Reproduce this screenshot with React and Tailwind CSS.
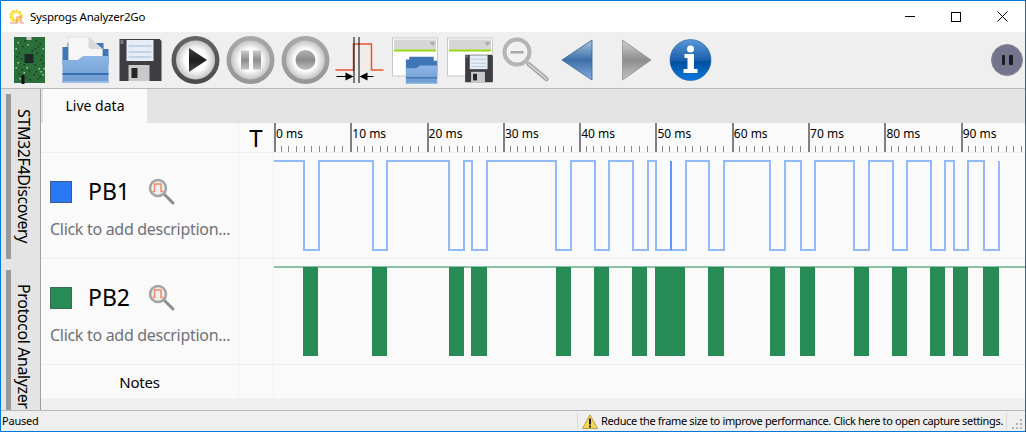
import { useId } from 'react';

const lows = [
  [303, 319], [372, 387], [448, 464], [471, 487], [555, 571], [594, 609], [632, 648], [655, 686],
  [708, 724], [769, 785], [800, 815], [853, 869], [892, 907], [930, 945], [953, 968], [983, 999],
];
const bars = [
  [303, 318], [372, 387], [449, 464], [471, 487], [556, 571], [594, 609], [632, 647], [655, 685],
  [708, 724], [770, 785], [800, 815], [854, 869], [892, 907], [930, 945], [953, 968], [983, 999],
];
const ticks = [1, 2, 3, 4, 5, 6, 7, 8, 9];
const labels = ['0 ms', '10 ms', '20 ms', '30 ms', '40 ms', '50 ms', '60 ms', '70 ms', '80 ms', '90 ms'];
const boardDots = [
  [-13, -18], [-8, -14], [9, -17], [12, -12], [-12, -8], [11, -5], [-13, 2], [12, 3], [-9, 9], [8, 8],
  [-12, 13], [3, 14], [12, 14], [-5, 17], [7, 18], [-3, -16], [4, -12], [-10, -2], [10, 11], [-7, 4], [6, -8],
  [-15, -12], [-6, -20], [5, -20], [-15, 7], [-2, 10], [4, 4], [-11, 18], [10, -1], [7, -14], [-4, 7], [1, -10],
  [-14, -4], [13, 8], [-1, 19], [9, 16], [-7, 12], [5, 11],
];

// every toolbar icon is drawn around the middle of its 55px slot
const Slot = ({ children }) => (
  <svg width="55" height="56" viewBox="-27.5 -28 55 56" className="flex-none block">{children}</svg>
);

const Board = () => (
  <Slot>
    <rect x="-16.5" y="-23" width="31" height="46" fill="#2a6f3a" />
    <rect x="-4" y="-23" width="5" height="3" fill="#c8c8c8" />
    <rect x="-6" y="-6" width="9" height="9" fill="#1f2a24" />
    {boardDots.map(([x, y], i) => (
      <rect key={i} x={x} y={y} width="1.5" height="1.5" fill={i % 3 === 0 ? '#a9c9a8' : '#123d1e'} />
    ))}
    <rect x="-9" y="15" width="3" height="9" fill="#111" />
  </Slot>
);

const FolderBack = () => <path d="M-23 -14 h5 v-4 h36 v6 h5 v16 h-46 z" fill="#3f76b8" />;

const FolderFront = () => {
  const id = useId();
  return (
    <>
      <defs>
        <linearGradient id={id} x1="0" y1="0" x2="0" y2="1">
          <stop offset="0" stopColor="#8db6e4" />
          <stop offset="1" stopColor="#6c9ad0" />
        </linearGradient>
      </defs>
      <path d="M-23 -1 h15 l6 -4 h25 v27 h-46 z" fill={`url(#${id})`} />
      <rect x="-23" y="12" width="46" height="2" fill="#3b70b0" />
      <rect x="-23" y="20" width="46" height="2" fill="#9cbde3" />
    </>
  );
};

const Folder = ({ dx = 0, dy = 0, s = 1 }) => (
  <g transform={`translate(${dx} ${dy}) scale(${s})`}>
    <FolderBack />
    <FolderFront />
  </g>
);

const Floppy = ({ dx = 0, dy = 0, s = 1 }) => (
  <g transform={`translate(${dx} ${dy}) scale(${s})`}>
    <path d="M-21 -21 h40 l2 2 v40 h-42 z" fill="#3d3d42" />
    <rect x="-14" y="-20" width="27" height="21" fill="#e6edf5" />
    <path d="M-12 -14 h23 M-12 -8 h23 M-12 -3 h23" stroke="#9db8d6" strokeWidth="1" />
    <rect x="-12" y="5" width="21" height="16" fill="#c9c9c9" />
    <rect x="-9" y="8" width="6" height="10" fill="#26262a" />
    <rect x="-20" y="-20" width="3" height="4" fill="#77777d" />
  </g>
);

const OpenFile = () => (
  <Slot>
    <g transform="translate(0 1)"><FolderBack /></g>
    <path d="M-17 -23 h20 l14 12 v14 h-34 z" fill="#f6f6f6" stroke="#d0d0d0" strokeWidth="0.5" />
    <path d="M3 -23 l14 12 h-11 q-3 0 -3 -3 z" fill="#d8d8d8" />
    <g transform="translate(0 1)"><FolderFront /></g>
  </Slot>
);

const Ring = ({ ring, ring2, children }) => {
  const id = useId();
  const id2 = useId();
  return (
    <Slot>
      <defs>
        <linearGradient id={id} x1="0" y1="0" x2="0" y2="1">
          <stop offset="0" stopColor={ring2} />
          <stop offset="1" stopColor={ring} />
        </linearGradient>
        <radialGradient id={id2} cx="0.5" cy="0.5" r="0.5">
          <stop offset="0.55" stopColor="#ffffff" />
          <stop offset="1" stopColor="#c4c4c4" />
        </radialGradient>
      </defs>
      <circle r="24" fill={`url(#${id})`} />
      <circle r="19.5" fill={`url(#${id2})`} />
      {children}
    </Slot>
  );
};

const Fade = ({ id, top, mid, bottom }) => (
  <defs>
    <linearGradient id={id} x1="0" y1="0" x2="0" y2="1">
      <stop offset="0" stopColor={top} />
      <stop offset="0.5" stopColor={mid} />
      <stop offset="1" stopColor={bottom} />
    </linearGradient>
  </defs>
);

const PlayIcon = () => {
  const id = useId();
  return (
    <Ring ring="#4a4a4a" ring2="#666666">
      <Fade id={id} top="#444444" mid="#1c1c1c" bottom="#4a4a4a" />
      <path d="M-6.5 -12 L11.5 0 L-6.5 12 z" fill={`url(#${id})`} />
    </Ring>
  );
};

const PauseIcon = () => {
  const id = useId();
  return (
    <Ring ring="#969696" ring2="#a8a8a8">
      <Fade id={id} top="#cccccc" mid="#8e8e8e" bottom="#c2c2c2" />
      <rect x="-9.5" y="-9.5" width="8" height="19" fill={`url(#${id})`} />
      <rect x="2.5" y="-9.5" width="8" height="19" fill={`url(#${id})`} />
    </Ring>
  );
};

const RecordIcon = () => {
  const id = useId();
  return (
    <Ring ring="#969696" ring2="#a8a8a8">
      <Fade id={id} top="#b2b2b2" mid="#8c8c8c" bottom="#c0c0c0" />
      <circle r="10" fill={`url(#${id})`} />
    </Ring>
  );
};

const Pulse = () => (
  <Slot>
    <rect x="-7" y="-16" width="18" height="26" fill="#f2ebe8" />
    <path d="M-25 10 H-7 V-16 H11 V10 H23" fill="none" stroke="#e8572f" strokeWidth="1.5" />
    <path d="M-6.5 -23 V23 M-1.5 -23 V23" stroke="#000" strokeWidth="1" />
    <path d="M-24 16.5 H-12 M4 16.5 H13" stroke="#000" strokeWidth="1" />
    <path d="M-7 16.5 L-15 12.5 V20.5 z M-1 16.5 L7 12.5 V20.5 z" fill="#000" />
  </Slot>
);

const Config = ({ children }) => (
  <Slot>
    <rect x="-23" y="-22" width="45" height="38" fill="#fff" stroke="#c8c8c8" />
    <rect x="-21.5" y="-20.5" width="42" height="10" fill="#d6d6d6" />
    <rect x="-21.5" y="-10.5" width="42" height="2" fill="#93d60f" />
    <path d="M14 -18 h6 l-3 4 z" fill="#aaa" />
    {children}
  </Slot>
);

const Magnifier = () => (
  <Slot>
    <path d="M3 4 L21 19" stroke="#a9a9a9" strokeWidth="4.5" strokeLinecap="round" />
    <path d="M3 4 L21 19" stroke="#d6d6d6" strokeWidth="1.5" strokeLinecap="round" />
    <circle cx="-8.5" cy="-8" r="12.5" fill="#f1f1f1" stroke="#b4b4b4" strokeWidth="4" />
    <rect x="-15" y="-9" width="13" height="2.5" fill="#a8a8a8" />
  </Slot>
);

const ArrowLeft = () => {
  const id = useId();
  return (
    <Slot>
      <Fade id={id} top="#a9c6e0" mid="#3d6fa8" bottom="#86aee2" />
      <path d="M11.5 -20 L-18.5 0 L11.5 20 z" fill={`url(#${id})`} stroke="#2e5f94" strokeWidth="0.8" />
    </Slot>
  );
};

const ArrowRight = () => {
  const id = useId();
  return (
    <Slot>
      <Fade id={id} top="#d2d2d2" mid="#8d8d8d" bottom="#c4c4c4" />
      <path d="M-13 -20 L15.5 0 L-13 20 z" fill={`url(#${id})`} stroke="#8f8f8f" strokeWidth="0.8" />
    </Slot>
  );
};

const Info = () => {
  const id = useId();
  return (
    <Slot>
      <defs>
        <linearGradient id={id} x1="0" y1="0" x2="0" y2="1">
          <stop offset="0" stopColor="#5a97d6" />
          <stop offset="0.5" stopColor="#1c60ad" />
          <stop offset="0.55" stopColor="#004f9f" />
          <stop offset="1" stopColor="#0a7ae0" />
        </linearGradient>
      </defs>
      <circle r="20.5" fill={`url(#${id})`} stroke="#0a4f99" strokeWidth="0.5" />
      <circle cy="-11" r="3.5" fill="#fff" />
      <path d="M-6 -6 H3.5 V9 H7 V13 H-7 V9 H-3 V-2 H-6 z" fill="#fff" />
    </Slot>
  );
};

const SmallMagnifier = () => (
  <svg width="28" height="28" viewBox="0 0 28 28" className="flex-none">
    <path d="M15 15 L25 25" stroke="#8e8e8e" strokeWidth="3" strokeLinecap="round" />
    <circle cx="10" cy="10" r="8" fill="#eeeeee" stroke="#a3a3a3" strokeWidth="2.5" />
    <path d="M4.5 13.5 H6.5 V6 H13 V13.5 H15.5" fill="none" stroke="#f58a68" strokeWidth="1.5" />
  </svg>
);

const Signal = ({ color, border, label, children }) => (
  <div className="flex h-[106px] border-b border-[#f0f0f0]">
    <div className="w-[198px] flex-none border-r border-[#f0f0f0] pl-[9px] pt-[25px]">
      <div className="flex items-center h-[28px]">
        <div className={`w-[22px] h-[22px] border ${color} ${border}`} />
        <span className="ml-[16px] w-[60px] mb-[3px] text-[23px] leading-[28px] text-black">{label}</span>
        <SmallMagnifier />
      </div>
      <div className="mt-[12px] text-[16px] leading-[22px] text-[#6e7178] tracking-[-0.3px] whitespace-nowrap">Click to add description...</div>
    </div>
    <div className="w-[35px] flex-none border-r border-[#f0f0f0]" />
    <div className="flex-1">{children}</div>
  </div>
);

const App = () => {
  // blue trace is built from the low pulses, coordinates are page x minus the 274 column start
  const trace = lows.reduce((d, [a, b]) => `${d} H${a - 274 + 1} V97 H${b - 274} V8`, 'M0 8');

  return (
    <div className="w-[1026px] h-[432px] flex flex-col overflow-hidden border border-[#0078d7] bg-white font-['Noto_Sans','Open_Sans',sans-serif] text-black">
      {/* Title bar */}
      <div className="h-[31px] flex-none flex items-center bg-white">
        <svg width="16" height="16" viewBox="0 0 16 16" className="ml-[8px] flex-none">
          <circle cx="7" cy="7" r="5" fill="none" stroke="#f5d80f" strokeWidth="3" strokeDasharray="2.2 1" />
          <circle cx="7" cy="7" r="4" fill="none" stroke="#fbe54a" strokeWidth="2" />
          <path d="M1 14 H8 V8 H12 V14 H15" fill="none" stroke="#f0906a" strokeWidth="1.2" />
        </svg>
        <span className="ml-[5px] text-[11.5px] leading-[16px] tracking-[-0.25px]">Sysprogs Analyzer2Go</span>
        <div className="ml-auto flex items-center">
          <div className="w-[46px] flex justify-center"><div className="w-[10px] h-px bg-black" /></div>
          <div className="w-[46px] flex justify-center"><div className="w-[10px] h-[10px] border border-black" /></div>
          <div className="w-[46px] flex justify-center">
            <svg width="11" height="11" viewBox="0 0 11 11"><path d="M0.5 0.5 L10.5 10.5 M10.5 0.5 L0.5 10.5" stroke="#000" strokeWidth="1" /></svg>
          </div>
        </div>
      </div>

      {/* Toolbar */}
      <div className="h-[57px] flex-none flex items-center pl-[2px] bg-[#efefef] border-b border-[#b8b8b8]">
        <Board />
        <OpenFile />
        <Slot><Floppy /></Slot>
        <PlayIcon />
        <PauseIcon />
        <RecordIcon />
        <Pulse />
        <Config><Folder dx="6" dy="9" s="0.68" /></Config>
        <Config><Floppy dx="8.5" dy="8.5" s="0.66" /></Config>
        <Magnifier />
        <ArrowLeft />
        <ArrowRight />
        <Info />
        <div className="ml-auto mr-[2px] w-[32px] h-[32px] rounded-full bg-[#74748c] border border-[#8a8a98] flex items-center justify-center gap-[4px]">
          <div className="w-[3px] h-[10px] bg-[#1c1c24] rounded-[1px]" />
          <div className="w-[4px] h-[10px] bg-[#1c1c24] rounded-[1px]" />
        </div>
      </div>

      {/* Main area */}
      <div className="h-[321px] flex-none flex">
        <div className="w-[40px] flex-none flex flex-col gap-[11px] pl-[5px] pt-[5px] bg-[#e4e4e4] border-r border-[#a0a0a0] overflow-hidden">
          <div className="h-[165px] flex-none border-l-[5px] border-[#999999] flex justify-center">
            <span className="[writing-mode:vertical-rl] text-[16px] leading-[22px] tracking-[-0.4px] whitespace-nowrap pr-[3px] pt-[15px]">STM32F4Discovery</span>
          </div>
          <div className="h-[145px] flex-none border-l-[5px] border-[#999999] flex justify-center">
            <span className="[writing-mode:vertical-rl] text-[16px] leading-[22px] tracking-[-0.4px] whitespace-nowrap pr-[3px] pt-[14px]">Protocol Analyzer</span>
          </div>
        </div>

        <div className="flex-1 min-w-0 flex flex-col bg-[#f0f0f0]">
          <div className="h-[34px] flex-none flex bg-[#e3e3e3] pl-[2px]">
            <div className="w-[104px] flex items-center justify-center bg-[#fafafa] text-[14px] leading-[20px]">Live data</div>
          </div>

          <div className="bg-[#fafafa]">
            {/* Ruler */}
            <div className="h-[30px] flex border-b border-[#f0f0f0] overflow-hidden">
              <div className="w-[198px] flex-none border-r border-[#f0f0f0]" />
              <div className="w-[35px] flex-none border-r border-[#f0f0f0] flex items-center justify-center text-[24px] leading-[24px]">T</div>
              {labels.map((label) => (
                <div key={label} className="w-[76.3px] flex-none border-l-2 border-[#808080] first:border-l-transparent flex flex-col justify-between">
                  <span className="pt-[3px] text-[12px] leading-[16px] whitespace-nowrap">{label}</span>
                  <svg width="76" height="6" viewBox="0 0 76 6" className="block" shapeRendering="crispEdges">
                    {ticks.map((t) => (
                      <rect key={t} x={t * 7.63 - 3} y="0" width="1" height="6" fill="#8a8a8a" />
                    ))}
                  </svg>
                </div>
              ))}
            </div>

            <Signal color="bg-[#2979f5]" border="border-[#3b5a8c]" label="PB1">
              <svg width="751" height="105" viewBox="0 0 751 105" className="block" shapeRendering="crispEdges">
                <path d={trace} fill="none" stroke="#92b9f8" strokeWidth="2" />
                <path d="M397 8 V97" stroke="#5e97f9" strokeWidth="2" />
              </svg>
            </Signal>

            <Signal color="bg-[#278b56]" border="border-[#3f6b52]" label="PB2">
              <svg width="751" height="105" viewBox="0 0 751 105" className="block" shapeRendering="crispEdges">
                <rect x="0" y="7" width="751" height="2" fill="#8cc3a6" />
                {bars.map(([a, b]) => (
                  <rect key={a} x={a - 274} y="8" width={b - a} height="89" fill="#278b56" />
                ))}
              </svg>
            </Signal>

            <div className="h-[33px] flex">
              <div className="w-[198px] flex-none border-r border-[#f0f0f0] flex items-center justify-center text-[15px] leading-[22px] tracking-[-0.2px]">Notes</div>
              <div className="w-[35px] flex-none border-r border-[#f0f0f0]" />
            </div>
          </div>
        </div>
      </div>

      {/* Status bar */}
      <div className="flex-1 min-h-0 flex items-center border-t border-[#b8b8b8] bg-[#efefef] text-[11px] leading-[16px] pl-[1px]">
        <span className="tracking-[-0.2px]">Paused</span>
        <div className="ml-auto h-[17px] flex items-center border-l border-r border-[#d8d8d8] pl-[4px] pr-[3px]">
          <svg width="16" height="15" viewBox="0 0 16 15" className="flex-none">
            <path d="M8 0.8 L15.5 14.5 H0.5 z" fill="#f5d75a" stroke="#a88f35" strokeWidth="0.8" />
            <rect x="7" y="4.5" width="2" height="6" fill="#222" />
            <rect x="7" y="11.5" width="2" height="2" fill="#222" />
          </svg>
          <span className="ml-[3px] whitespace-nowrap tracking-[-0.35px]">Reduce the frame size to improve performance. Click here to open capture settings.</span>
        </div>
        <svg width="18" height="16" viewBox="0 0 18 16" className="flex-none" shapeRendering="crispEdges">
          <path d="M13 6h2v2h-2z M9 10h2v2h-2z M13 10h2v2h-2z M5 14h2v2h-2z M9 14h2v2h-2z M13 14h2v2h-2z" fill="#b5b5b5" />
        </svg>
      </div>
    </div>
  );
};

export default App;
